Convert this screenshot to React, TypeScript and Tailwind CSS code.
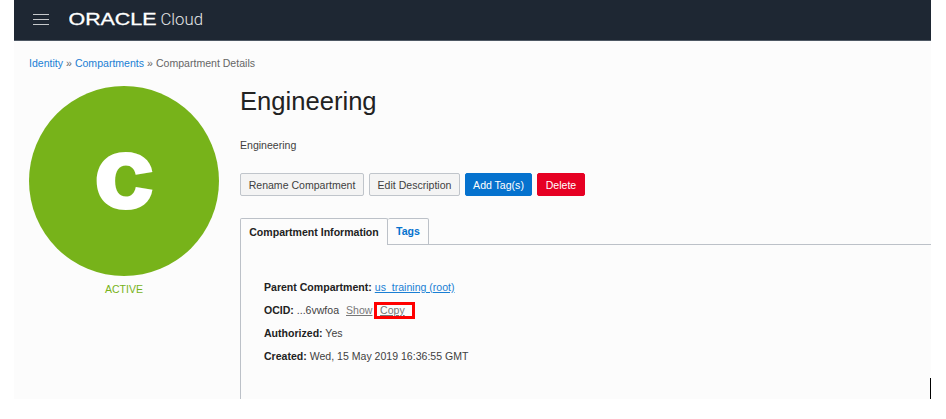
import React from "react";

const button = "flex h-[23px] items-center justify-center rounded-[2px] border pt-px leading-none";

function Header() {
  return (
    <header className="flex h-[41px] shrink-0 items-start border-b border-[#4d5763] bg-[#1e2733]">
      <button aria-label="Menu" className="mt-[14px] ml-[19px] flex w-[16px] flex-col gap-[4px]">
        <span className="h-px w-full bg-[#c5c8cb]" />
        <span className="h-px w-full bg-[#c5c8cb]" />
        <span className="h-px w-full bg-[#c5c8cb]" />
      </button>
      <svg className="ml-[20px]" width="140" height="38" aria-label="Oracle Cloud">
        <text x="-0.5" y="24.8" textLength="88" lengthAdjust="spacingAndGlyphs" fill="#fff" stroke="#fff" strokeWidth="0.3" fontFamily="Liberation Sans, sans-serif" fontSize="16">ORACLE</text>
        <text x="91.5" y="25" textLength="42.5" lengthAdjust="spacingAndGlyphs" fill="#e4e6e8" fontFamily="Roboto, sans-serif" fontWeight="300" fontSize="17">Cloud</text>
      </svg>
    </header>
  );
}

export default function App() {
  return (
    <div className="h-[419px] w-[946px] overflow-hidden bg-white pl-[14px] font-['Liberation_Sans',Arial,sans-serif] text-[10.56px] leading-[13px] text-[#3f3f3f]">
      <div className="flex h-[399px] w-[917px] flex-col bg-[#fcfcfc]">
        <Header />
        <nav className="mt-[16px] ml-[15px] flex h-[13px] gap-[3px] whitespace-nowrap text-[#666]">
          <a className="text-[#1a7fd4]">Identity</a>
          <span>»</span>
          <a className="text-[#1a7fd4]">Compartments</a>
          <span>»</span>
          <span>Compartment Details</span>
        </nav>
        <main className="flex min-h-0 flex-1 pl-[15px]">
          <aside className="w-[190px] shrink-0 pt-[16px]">
            <div className="h-[190px] w-[190px] rounded-full bg-[#77b31a]">
              <svg width="190" height="190">
                <text x="64" y="123" textLength="63" lengthAdjust="spacingAndGlyphs" fill="#fff" fontFamily="Inter, sans-serif" fontWeight="800" fontSize="103">c</text>
              </svg>
            </div>
            <p className="mt-[7px] text-center text-[#77b31a]">ACTIVE</p>
          </aside>
          <section className="ml-[21px] flex min-w-0 flex-1 flex-col">
            <h1 className="mt-[15px] h-[32px] text-[25.6px] leading-[32px] text-[#222]">Engineering</h1>
            <p className="mt-[22px]">Engineering</p>
            <div className="mt-[21px] flex gap-[5px]">
              <button className={`${button} w-[124px] border-[#c0c5cb] bg-[#f4f4f4]`}>Rename Compartment</button>
              <button className={`${button} w-[91px] border-[#c0c5cb] bg-[#f4f4f4]`}>Edit Description</button>
              <button className={`${button} w-[67px] border-[#0572ce] bg-[#0572ce] text-white`}>Add Tag(s)</button>
              <button className={`${button} w-[48px] border-[#e60023] bg-[#e60023] text-white`}>Delete</button>
            </div>
            <div className="mt-[22px] flex h-[27px] font-bold">
              <div className="flex w-[148px] items-center justify-center rounded-t-[2px] border border-b-0 border-[#bcc1c8] text-[#222]">Compartment Information</div>
              <div className="flex w-[41px] items-center justify-center rounded-t-[2px] border border-l-0 border-[#bcc1c8] text-[#0572ce]">Tags</div>
              <div className="flex-1 border-b border-[#bcc1c8]" />
            </div>
            <div className="flex min-h-0 flex-1 justify-between border-l border-[#bcc1c8]">
              <div className="flex flex-col gap-[10px] pt-[36px] pl-[23px] whitespace-nowrap [&_b]:text-[#222]">
                <p><b>Parent Compartment:</b> <a className="text-[#1a7fd4] underline">us_training (root)</a></p>
                <p className="flex h-[13px]"><span><b>OCID:</b> ...6vwfoa</span>
                  <a className="ml-[7px] w-[28px] text-[#777] underline">Show</a>
                  <a className="-mt-[2px] h-[17px] w-[41px] border-[3px] border-[#ff0000] pl-[3px] leading-[11px] text-[#777] underline">Copy</a>
                </p>
                <p><b>Authorized:</b> Yes</p>
                <p><b>Created:</b> Wed, 15 May 2019 16:36:55 GMT</p>
              </div>
              <div className="h-[21px] w-px self-end bg-black" />
            </div>
          </section>
        </main>
      </div>
    </div>
  );
}
